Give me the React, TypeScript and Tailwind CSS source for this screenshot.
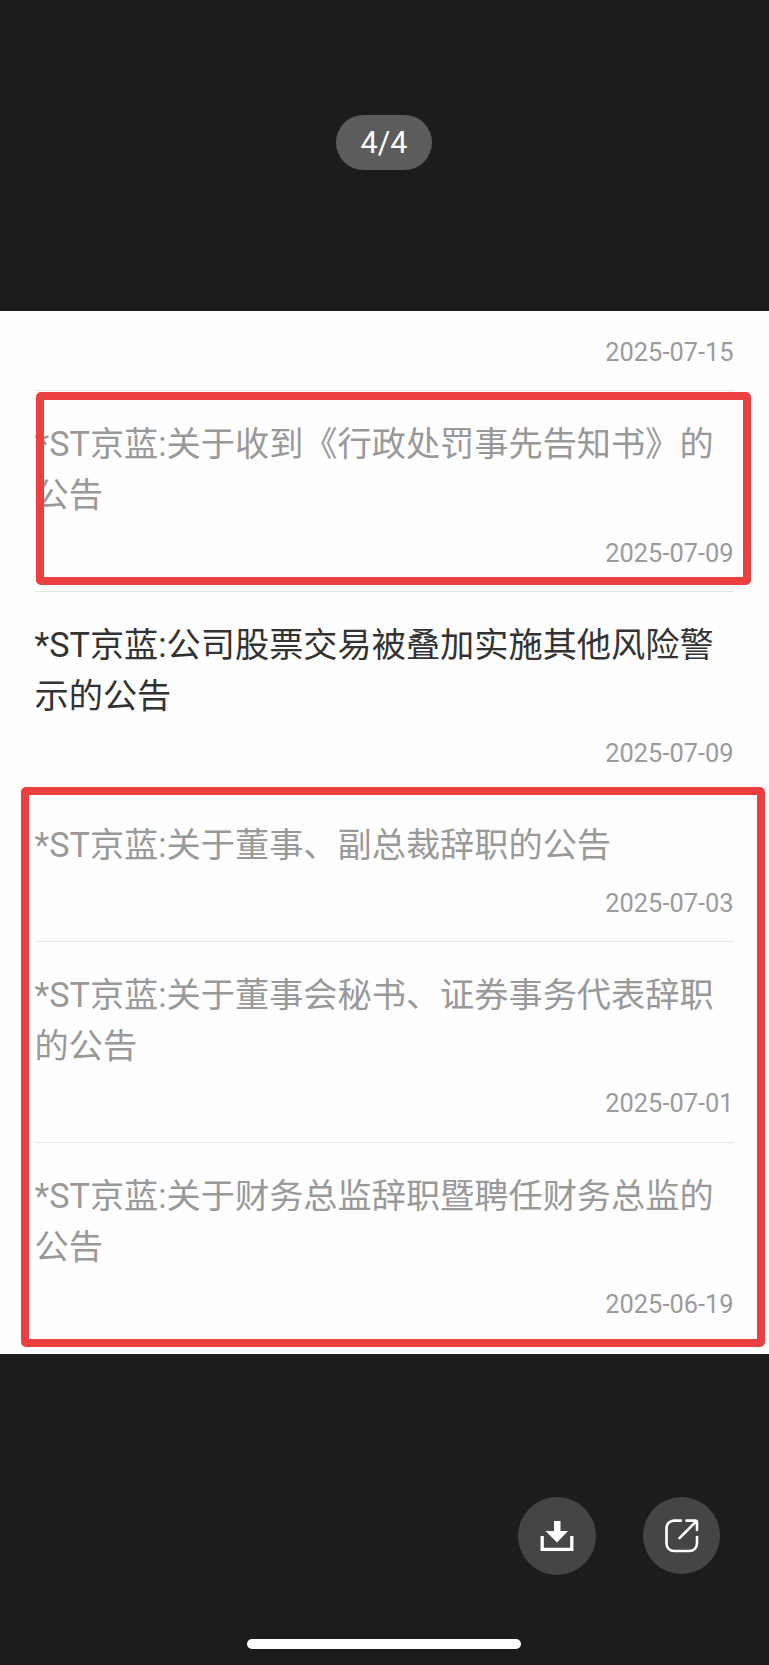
import clsx from "clsx";
import React from "react";

interface Notice {
  title: string;
  date: string;
  unread?: boolean;
}

const notices: Notice[] = [
  { title: "*ST京蓝:关于收到《行政处罚事先告知书》的公告", date: "2025-07-09" },
  {
    title: "*ST京蓝:公司股票交易被叠加实施其他风险警示的公告",
    date: "2025-07-09",
    unread: true,
  },
  { title: "*ST京蓝:关于董事、副总裁辞职的公告", date: "2025-07-03" },
  {
    title: "*ST京蓝:关于董事会秘书、证券事务代表辞职的公告",
    date: "2025-07-01",
  },
  {
    title: "*ST京蓝:关于财务总监辞职暨聘任财务总监的公告",
    date: "2025-06-19",
  },
];

function NoticeDate({ date }: { date: string }) {
  return (
    <p className="text-right text-[25.4px] leading-[30px] text-[#9b9b9b]">
      {date}
    </p>
  );
}

function NoticeItem({ title, date, unread }: Notice) {
  return (
    <li className="border-t border-[#e2e6e6] pt-[28px] pb-[23.1px]">
      <h2
        className={clsx(
          "mb-[16.2px] text-[34.2px] leading-[51.2px]",
          unread ? "text-[#333333]" : "text-[#999999]"
        )}
      >
        {title}
      </h2>
      <NoticeDate date={date} />
    </li>
  );
}

// Red marker boxes drawn over the picture
function Marker({ className }: { className: string }) {
  return (
    <div
      className={clsx(
        "absolute rounded-[5px] border-8 border-[#ec4040]",
        className
      )}
    />
  );
}

function DownloadIcon() {
  return (
    <svg width="34" height="32" viewBox="0 0 34 32" fill="none">
      <path d="M14 1h6.5v10H28L17 22.5 5.500 11H14z" fill="#fff" />
      <path d="M2.200 16v13.300h29.600V16" stroke="#fff" strokeWidth="3.300" />
    </svg>
  );
}

function ShareIcon() {
  return (
    <svg
      className="ml-[1px] mt-[1px]"
      width="36"
      height="36"
      viewBox="0 0 36 36"
      fill="none"
      stroke="#fff"
      strokeWidth="2.600"
      strokeLinecap="round"
      strokeLinejoin="round"
    >
      <path d="M16.800 2.600H10A7.500 7.500 0 0 0 2.500 10v15.500A7.500 7.500 0 0 0 10 33h15.500a7.500 7.500 0 0 0 7.500-7.500v-6.400" />
      <path d="M22.500 2.600h8.500a2 2 0 0 1 2 2V12M32 3.600 15.500 20.200" />
    </svg>
  );
}

export default function App() {
  return (
    <div className="flex h-[1665px] w-[769px] flex-col overflow-hidden bg-[#1c1c1c] font-['Roboto','Noto_Sans_CJK_SC',sans-serif]">
      <header className="flex h-[311px] shrink-0 justify-center pt-[115px] pr-px">
        <span className="flex h-[55px] w-24 items-center justify-center rounded-full bg-[#5c5c5c] text-[30.5px] text-white">
          4/4
        </span>
      </header>

      <main className="relative h-[1043px] shrink-0 bg-[#fefefe] pr-[35.500px] pl-[34.500px]">
        <div className="h-[79px] pt-[26px]">
          <NoticeDate date="2025-07-15" />
        </div>
        <ul>
          {notices.map((notice) => (
            <NoticeItem key={notice.title} {...notice} />
          ))}
        </ul>
        <Marker className="top-[81px] left-[36px] h-[193px] w-[715px]" />
        <Marker className="top-[476px] left-[21px] h-[560px] w-[744px]" />
      </main>

      <footer className="flex flex-1 flex-col items-center">
        <div className="flex w-full justify-end gap-[47px] pt-[143px] pr-[49px]">
          <button
            aria-label="下载"
            className="flex size-[78px] items-center justify-center rounded-full bg-[#454545]"
          >
            <DownloadIcon />
          </button>
          <button
            aria-label="分享"
            className="flex size-[77px] items-center justify-center rounded-full bg-[#454545]"
          >
            <ShareIcon />
          </button>
        </div>
        <div className="mt-[64px] mr-px h-[10px] w-[274px] rounded-full bg-white" />
      </footer>
    </div>
  );
}
